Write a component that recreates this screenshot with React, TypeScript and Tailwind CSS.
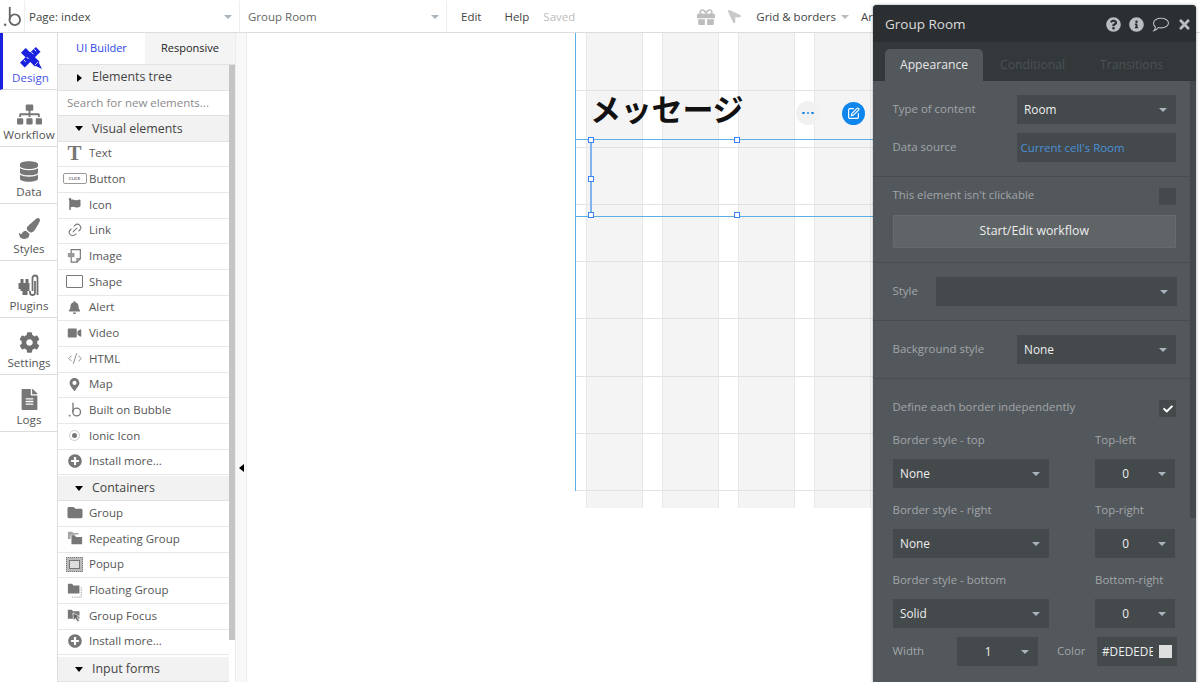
import { ReactNode } from "react";
import {
  FaBell,
  FaCheck,
  FaCog,
  FaDatabase,
  FaFileAlt,
  FaFlag,
  FaFolder,
  FaGift,
  FaInfoCircle,
  FaLocationArrow,
  FaMapMarkerAlt,
  FaPaintBrush,
  FaPlusCircle,
  FaQuestionCircle,
  FaSitemap,
  FaTimes,
  FaVideo,
} from "react-icons/fa";
import { Link2, CodeXml, SquarePen } from "lucide-react";

const Caret = ({ className = "border-t-[#a9b4bd]" }: { className?: string }) => (
  <span className={`inline-block h-0 w-0 border-x-[4.5px] border-t-[4px] border-x-transparent ${className}`} />
);

const BubbleLogo = ({ className = "" }: { className?: string }) => (
  <svg viewBox="0 0 20 24" className={className} fill="none" stroke="currentColor" strokeWidth="2">
    <circle cx="2" cy="20.5" r="1.4" fill="currentColor" stroke="none" />
    <path d="M7 1v14" />
    <circle cx="12.5" cy="15" r="5.8" />
  </svg>
);

const DesignIcon = () => (
  <svg viewBox="0 0 24 24" className="h-[23px] w-[23px]" fill="none">
    <path d="M4.500 4.500 L19 19" stroke="#1a22e0" strokeWidth="7" />
    <path d="M20 3.500 L3.500 20" stroke="#1a22e0" strokeWidth="7" />
    <path d="M20 16 L24 24 L16 20 Z" fill="#1a22e0" />
    <path d="M16 3.500l2 2M13 6.500l2 2M8 11.500l2 2M5 14.500l2 2" stroke="#fff" strokeWidth="1" />
    <path d="M16.500 20l3.500-3.500" stroke="#fff" strokeWidth="0.8" />
  </svg>
);

const PluginIcon = () => (
  <svg viewBox="0 0 24 24" className="h-[24px] w-[25px]" fill="#6f6f6f">
    <path d="M1 10h2V6h3v4h2V6h3v4h1v8h-2v4H5v-4H3v-2H1z" />
    <path d="M15 18V5a2.5 2.5 0 0 1 5 0v17" fill="none" stroke="#6f6f6f" strokeWidth="1.8" />
    <path d="M12.5 18v1.5a2.5 2.5 0 0 0 5 0V8" fill="none" stroke="#6f6f6f" strokeWidth="1.8" />
  </svg>
);

const ImageIcon = () => (
  <svg viewBox="0 0 18 18" className="h-[15px] w-[15px]" fill="none" stroke="#777" strokeWidth="1.4">
    <path d="M5 2h11v11l-4 4H5z" />
    <path d="M12 17v-4h4" />
    <rect x="1" y="6" width="8" height="5" fill="#999" stroke="none" />
  </svg>
);

const RepeatIcon = () => (
  <svg viewBox="0 0 18 18" className="h-[16px] w-[16px]" fill="#777">
    <path d="M1 2h5l1 1.5h6V5H4v5H1z" opacity="0.65" />
    <path d="M5 6h4l1 2h7v8H5z" />
    <path d="M3 5h5v1H3z" opacity="0.6" />
  </svg>
);

const PopupIcon = () => (
  <div className="flex h-[15px] w-[17px] items-center justify-center border border-dotted border-[#777] bg-[#bbb]">
    <div className="flex h-[9px] w-[11px] items-center justify-center border border-[#777] bg-[#ddd]" />
  </div>
);

const FloatingIcon = () => (
  <svg viewBox="0 0 18 18" className="h-[16px] w-[16px]">
    <path d="M1 2h5l1 2h7v9H1z" fill="#777" />
    <path d="M16 6v11H5" fill="none" stroke="#999" strokeWidth="1" strokeDasharray="1.5 1" />
  </svg>
);

const FocusIcon = () => (
  <svg viewBox="0 0 18 18" className="h-[15px] w-[15px]">
    <path d="M1 2h5l1 2h8v9H1z" fill="#777" />
    <path d="M7 6l9 4-4 1 3 4-2 1.5-3-4-2 3z" fill="#666" stroke="#fff" strokeWidth="0.8" />
  </svg>
);

const CommentIcon = () => (
  <svg viewBox="0 0 20 17" className="h-[15px] w-[18px]" fill="none" stroke="#b9bdc0" strokeWidth="1.2">
    <path d="M10 1.500c5 0 8.500 2.400 8.500 5.400s-3.500 5.400-8.500 5.400c-1 0-2-.1-3-.3C6 13.600 4.300 15 2 15.500c1-1.100 1.700-2.500 1.800-4C2.300 10.400 1.500 8.800 1.500 6.900c0-3 3.500-5.400 8.500-5.400z" />
  </svg>
);

const RailItem = ({ label, icon, active }: { label: string; icon: ReactNode; active?: boolean }) => (
  <div
    className={`flex h-[57px] w-[58px] flex-col items-center border-b border-[#dddddd] pt-[12px] ${
      active ? "border-l-[3px] border-l-[#1a22e0] text-[#4a56e8]" : "text-[#555]"
    }`}
  >
    <div className="flex h-[24px] items-center justify-center">{icon}</div>
    <span className="mt-[1px] text-[11.6px] leading-[16px] whitespace-nowrap">{label}</span>
  </div>
);

const SectionRow = ({ label, closed, className = "" }: { label: string; closed?: boolean; className?: string }) => (
  <div className={`flex h-[25.6px] items-center border-b border-[#e2e2e2] bg-[#f2f2f2] pt-[1px] pl-[13px] text-[#444] ${className}`}>
    <span className="flex w-[16px] justify-center">
      {closed ? (
        <span className="h-0 w-0 border-y-[4px] border-l-[5px] border-y-transparent border-l-black" />
      ) : (
        <span className="h-0 w-0 border-x-[4.5px] border-t-[5px] border-x-transparent border-t-black" />
      )}
    </span>
    <span className="ml-[5px] text-[12.4px]">{label}</span>
  </div>
);

const ElementRow = ({ label, icon }: { label: string; icon: ReactNode }) => (
  <div className="flex h-[25.67px] items-center border-b border-[#e8e8e8] bg-white pb-[2px] pl-[3px] text-[#555]">
    <span className="flex w-[27px] justify-center text-[#777]">{icon}</span>
    <span className="ml-[1px] text-[11.5px]">{label}</span>
  </div>
);

const visualElements: [string, ReactNode][] = [
  ["Text", <span className="font-['Liberation_Serif',serif] text-[21px] font-bold leading-none text-[#777]">T</span>],
  [
    "Button",
    <span className="flex h-[11px] w-[24px] items-center justify-center rounded-[2px] border border-[#999] text-[4px] font-bold text-[#777]">
      CLICK
    </span>,
  ],
  ["Icon", <FaFlag className="h-[12px] w-[13px]" />],
  ["Link", <Link2 className="h-[16px] w-[16px] -rotate-45" strokeWidth={1.6} />],
  ["Image", <ImageIcon />],
  ["Shape", <span className="block h-[13px] w-[17px] rounded-[1px] border border-[#777]" />],
  ["Alert", <FaBell className="h-[13px] w-[13px]" />],
  ["Video", <FaVideo className="h-[12px] w-[15px]" />],
  ["HTML", <CodeXml className="h-[15px] w-[16px]" strokeWidth={1.3} />],
  ["Map", <FaMapMarkerAlt className="h-[13px] w-[11px]" />],
  ["Built on Bubble", <BubbleLogo className="h-[16px] w-[14px]" />],
  [
    "Ionic Icon",
    <span className="flex h-[11px] w-[11px] items-center justify-center rounded-full border border-[#ccc]">
      <span className="h-[5px] w-[5px] rounded-full bg-[#777]" />
    </span>,
  ],
  ["Install more...", <FaPlusCircle className="h-[14px] w-[14px]" />],
];

const containers: [string, ReactNode][] = [
  ["Group", <FaFolder className="h-[15px] w-[16px]" />],
  ["Repeating Group", <RepeatIcon />],
  ["Popup", <PopupIcon />],
  ["Floating Group", <FloatingIcon />],
  ["Group Focus", <FocusIcon />],
  ["Install more...", <FaPlusCircle className="h-[14px] w-[14px]" />],
];

const Select = ({
  value,
  className,
  center,
  blue,
}: {
  value?: string;
  className: string;
  center?: boolean;
  blue?: boolean;
}) => (
  <div className={`flex h-[29px] items-center bg-[#44494c] pt-[1px] ${className}`}>
    {center ? (
      <span className="flex-1 pl-[8px] text-center text-[11.8px] text-[#eeeeee]">{value}</span>
    ) : (
      <span className={`flex-1 ${blue ? "pl-[4px] text-[11.45px] text-[#4a90d9]" : "pl-[7.5px] text-[11.8px] text-[#eeeeee]"}`}>
        {value}
      </span>
    )}
    {!blue && (
      <span className="flex w-[27px] justify-center">
        <Caret />
      </span>
    )}
  </div>
);

const Label = ({ children, className = "" }: { children: ReactNode; className?: string }) => (
  <span className={`text-[11.45px] text-[#a2a6a9] ${className}`}>{children}</span>
);

const BorderRow = ({ label, corner, value }: { label: string; corner: string; value: string }) => (
  <div className="mb-[12.5px]">
    <div className="flex h-[19px] items-center">
      <Label className="w-[202.5px]">{label}</Label>
      <Label>{corner}</Label>
    </div>
    <div className="mt-[9.5px] flex">
      <Select value={value} className="w-[156.5px]" />
      <Select value="0" center className="ml-[46px] w-[80px]" />
    </div>
  </div>
);

const Handle = ({ className }: { className: string }) => (
  <div className={`absolute h-[6px] w-[6px] border border-[#3b82f6] bg-white ${className}`} />
);

const PropertiesPanel = () => (
  <div className="absolute top-[5px] left-[873px] flex h-[677px] w-[323px] flex-col overflow-hidden rounded-t-[4px] bg-[#53585c] shadow-[0_0_3px_rgba(0,0,0,0.4)]">
    <div className="flex h-[37px] items-center bg-[#2b2f32] pt-[1px] pr-[4px] pl-[12px]">
      <span className="flex-1 text-[13.5px] text-[#dcdcdc]">Group Room</span>
      <div className="flex items-center gap-[8px] text-[#b9bdc0]">
        <FaQuestionCircle className="h-[15px] w-[15px]" />
        <FaInfoCircle className="h-[15px] w-[15px]" />
        <CommentIcon />
        <FaTimes className="ml-[-1px] h-[15px] w-[15px]" />
      </div>
    </div>
    <div className="flex h-[39px] items-end bg-[#33383b] pl-[12px]">
      <div className="flex h-[32px] w-[98px] items-center justify-center rounded-t-[5px] bg-[#53585c] pt-[1px] text-[12.2px] text-[#e6e6e6]">
        Appearance
      </div>
      <span className="mb-[7px] ml-[17px] text-[12.2px] text-[#4d5255]">Conditional</span>
      <span className="mb-[7px] ml-[35px] text-[12.2px] text-[#4d5255]">Transitions</span>
    </div>
    <div className="relative flex-1">
      <div className="absolute top-0 right-0 h-[437px] w-[6px] bg-[#44494c]" />
      <div className="w-[317px]">
        <div className="border-b border-[#484d50] pt-[14px] pb-[14px] pl-[19.5px]">
          <div className="flex items-center">
            <Label className="w-[124px] pb-[2px]">Type of content</Label>
            <Select value="Room" className="w-[159.5px]" />
          </div>
          <div className="mt-[9px] flex items-center">
            <Label className="w-[124px] pb-[2px]">Data source</Label>
            <Select value="Current cell's Room" blue className="w-[159.5px]" />
          </div>
        </div>
        <div className="border-b border-[#484d50] pt-[11px] pb-[13.5px] pl-[19.5px]">
          <div className="flex h-[17px] items-center">
            <Label className="w-[266.5px] pb-[3px]">This element isn't clickable</Label>
            <span className="h-[17px] w-[17px] bg-[#44494c]" />
          </div>
          <div className="mt-[10px] flex h-[33px] w-[283.5px] items-center justify-center rounded-[1px] border border-[#666b6e] bg-[#5f6467] text-[12.3px] text-[#eeeeee]">
            Start/Edit workflow
          </div>
        </div>
        <div className="border-b border-[#484d50] pt-[14.5px] pb-[14px] pl-[19.5px]">
          <div className="flex items-center">
            <Label className="w-[43.5px] pb-[2px]">Style</Label>
            <Select className="w-[241px]" />
          </div>
        </div>
        <div className="border-b border-[#484d50] pt-[14px] pb-[14px] pl-[19.5px]">
          <div className="flex items-center">
            <Label className="w-[124px] pb-[2px]">Background style</Label>
            <Select value="None" className="w-[159.5px]" />
          </div>
        </div>
        <div className="pt-[21px] pl-[19.5px]">
          <div className="flex h-[17px] items-center">
            <Label className="w-[266.5px] pb-[3px]">Define each border independently</Label>
            <span className="flex h-[17px] w-[17px] items-center justify-center bg-[#44494c]">
              <FaCheck className="h-[10px] w-[10px] text-white" />
            </span>
          </div>
          <div className="h-[13.5px]" />
          <BorderRow label="Border style - top" corner="Top-left" value="None" />
          <BorderRow label="Border style - right" corner="Top-right" value="None" />
          <BorderRow label="Border style - bottom" corner="Bottom-right" value="Solid" />
          <div className="-mt-[3.5px] flex items-center">
            <Label className="w-[64.5px] pb-[2px]">Width</Label>
            <Select value="1" center className="w-[81px]" />
            <Label className="ml-[19px] w-[40px] pb-[2px]">Color</Label>
            <div className="flex h-[29px] w-[80px] items-center bg-[#44494c] pl-[5px]">
              <span className="w-[51px] overflow-hidden text-[11.8px] text-[#eeeeee]">#DEDEDE</span>
              <span className="ml-[6px] h-[13px] w-[13px] bg-[#dedede]" />
            </div>
          </div>
        </div>
      </div>
    </div>
  </div>
);

const Canvas = () => (
  <div className="relative flex-1 overflow-hidden bg-white">
    {/* page columns */}
    <div className="absolute top-0 left-[339px] flex h-[475px] gap-[19px]">
      {[0, 1, 2, 3].map((i) => (
        <div key={i} className="w-[57px] border-x border-[#e8e8e8] bg-[#f4f4f4]" />
      ))}
    </div>
    {/* horizontal grid */}
    <div className="absolute top-0 left-[328px] h-[458px] w-[298px] pt-[1px]">
      {[0, 1, 2, 3, 4, 5, 6, 7].map((i) => (
        <div key={i} className="h-[57.1px] border-b border-[#e2e2e2]" />
      ))}
    </div>
    <div className="absolute top-0 left-[328px] h-[458px] w-[1px] bg-[#5ab0e4]" />
    <div className="absolute top-[106px] left-[328px] h-[78px] w-[298px] border-y border-[#5ab0e4]" />
    <div className="absolute top-[106px] left-[343px] h-[77px] w-[2px] bg-[#7fb4ee]" />
    <Handle className="top-[104px] left-[341px]" />
    <Handle className="top-[104px] left-[487px]" />
    <Handle className="top-[143px] left-[341px]" />
    <Handle className="top-[179px] left-[341px]" />
    <Handle className="top-[179px] left-[487px]" />
    <span className="absolute top-[51px] left-[343px] font-['Noto_Sans_CJK_JP',sans-serif] text-[31px] leading-[48px] font-bold tracking-[-0.2px] text-[#111]">
      メッセージ
    </span>
    <div className="absolute top-[68px] left-[549px] flex h-[24px] w-[24px] items-center justify-center gap-[2px] rounded-full bg-[#f1f1f1]">
      <span className="h-[2.5px] w-[2.5px] rounded-full bg-[#1e88e5]" />
      <span className="h-[2.5px] w-[2.5px] rounded-full bg-[#1e88e5]" />
      <span className="h-[2.5px] w-[2.5px] rounded-full bg-[#1e88e5]" />
    </div>
    <div className="absolute top-[68.5px] left-[595px] flex h-[23px] w-[23px] items-center justify-center rounded-full bg-[#0f86ee]">
      <SquarePen className="h-[13px] w-[13px] text-white" strokeWidth={2.2} />
    </div>
  </div>
);

export default function App() {
  return (
    <div className="relative flex h-[682px] w-[1200px] flex-col overflow-hidden bg-white font-['Open_Sans',sans-serif]">
      <div className="flex h-[33px] items-center border-b border-[#dddddd] bg-white pt-[1px] text-[11.5px] text-[#444]">
        <div className="flex h-full w-[25px] items-center justify-center border-r border-[#eeeeee] text-[#666]">
          <BubbleLogo className="h-[22px] w-[19px]" />
        </div>
        <div className="flex h-full w-[215px] items-center border-r border-[#eeeeee] pr-[7px] pl-[4px]">
          <span className="flex-1">Page: index</span>
          <Caret />
        </div>
        <div className="flex h-full w-[207px] items-center border-r border-[#eeeeee] pr-[7px] pl-[8px] text-[#666]">
          <span className="flex-1">Group Room</span>
          <Caret />
        </div>
        <span className="ml-[14px]">Edit</span>
        <span className="ml-[23px]">Help</span>
        <span className="ml-[14px] text-[#bbbbbb]">Saved</span>
        <FaGift className="ml-[122px] h-[18px] w-[18px] text-[#bdbdbd]" />
        <FaLocationArrow className="ml-[13px] h-[13px] w-[13px] -rotate-90 text-[#c9c9c9]" />
        <span className="ml-[15px]">Grid &amp; borders</span>
        <span className="ml-[5px] flex">
          <Caret className="border-t-[#bbbbbb]" />
        </span>
        <span className="ml-[12px]">Ar</span>
      </div>
      <div className="flex min-h-0 flex-1">
        <div className="flex w-[58px] shrink-0 flex-col border-r border-[#dddddd]">
          <RailItem label="Design" active icon={<DesignIcon />} />
          <RailItem label="Workflow" icon={<FaSitemap className="h-[21px] w-[25px] text-[#777]" />} />
          <RailItem label="Data" icon={<FaDatabase className="h-[21px] w-[18px] text-[#777]" />} />
          <RailItem label="Styles" icon={<FaPaintBrush className="h-[21px] w-[21px] text-[#777]" />} />
          <RailItem label="Plugins" icon={<PluginIcon />} />
          <RailItem label="Settings" icon={<FaCog className="h-[21px] w-[21px] text-[#6f6f6f]" />} />
          <RailItem label="Logs" icon={<FaFileAlt className="h-[21px] w-[17px] text-[#777]" />} />
        </div>
        <div className="flex w-[177px] shrink-0 flex-col">
          <div className="flex h-[32px] items-center border-b border-[#e2e2e2] text-[11px]">
            <span className="flex h-full w-[87px] items-center justify-center bg-white text-[#2b45e8]">UI Builder</span>
            <span className="flex h-full flex-1 items-center justify-center bg-[#f4f4f4] text-[#222]">Responsive</span>
          </div>
          <div className="flex min-h-0 flex-1">
            <div className="w-[171px] shrink-0">
              <SectionRow label="Elements tree" closed />
              <div className="flex h-[25.6px] items-center border-b border-[#e2e2e2] pl-[9px] text-[11.5px] text-[#8a8a8a]">
                Search for new elements...
              </div>
              <SectionRow label="Visual elements" />
              {visualElements.map(([label, icon]) => (
                <ElementRow key={label + "v"} label={label} icon={icon} />
              ))}
              <SectionRow label="Containers" className="mt-[0.5px]" />
              {containers.map(([label, icon]) => (
                <ElementRow key={label + "c"} label={label} icon={icon} />
              ))}
              <SectionRow label="Input forms" className="mt-[1.5px]" />
            </div>
            <div className="flex w-[6px] flex-col">
              <div className="h-[575px] bg-[#c4c4c4]" />
            </div>
          </div>
        </div>
        <div className="flex w-[12px] shrink-0 items-center justify-center border-x border-[#ececec] bg-[#f8f8f8] pt-[221px]">
          <span className="h-0 w-0 border-y-[4px] border-r-[5px] border-y-transparent border-r-black" />
        </div>
        <Canvas />
      </div>
      <PropertiesPanel />
    </div>
  );
}
